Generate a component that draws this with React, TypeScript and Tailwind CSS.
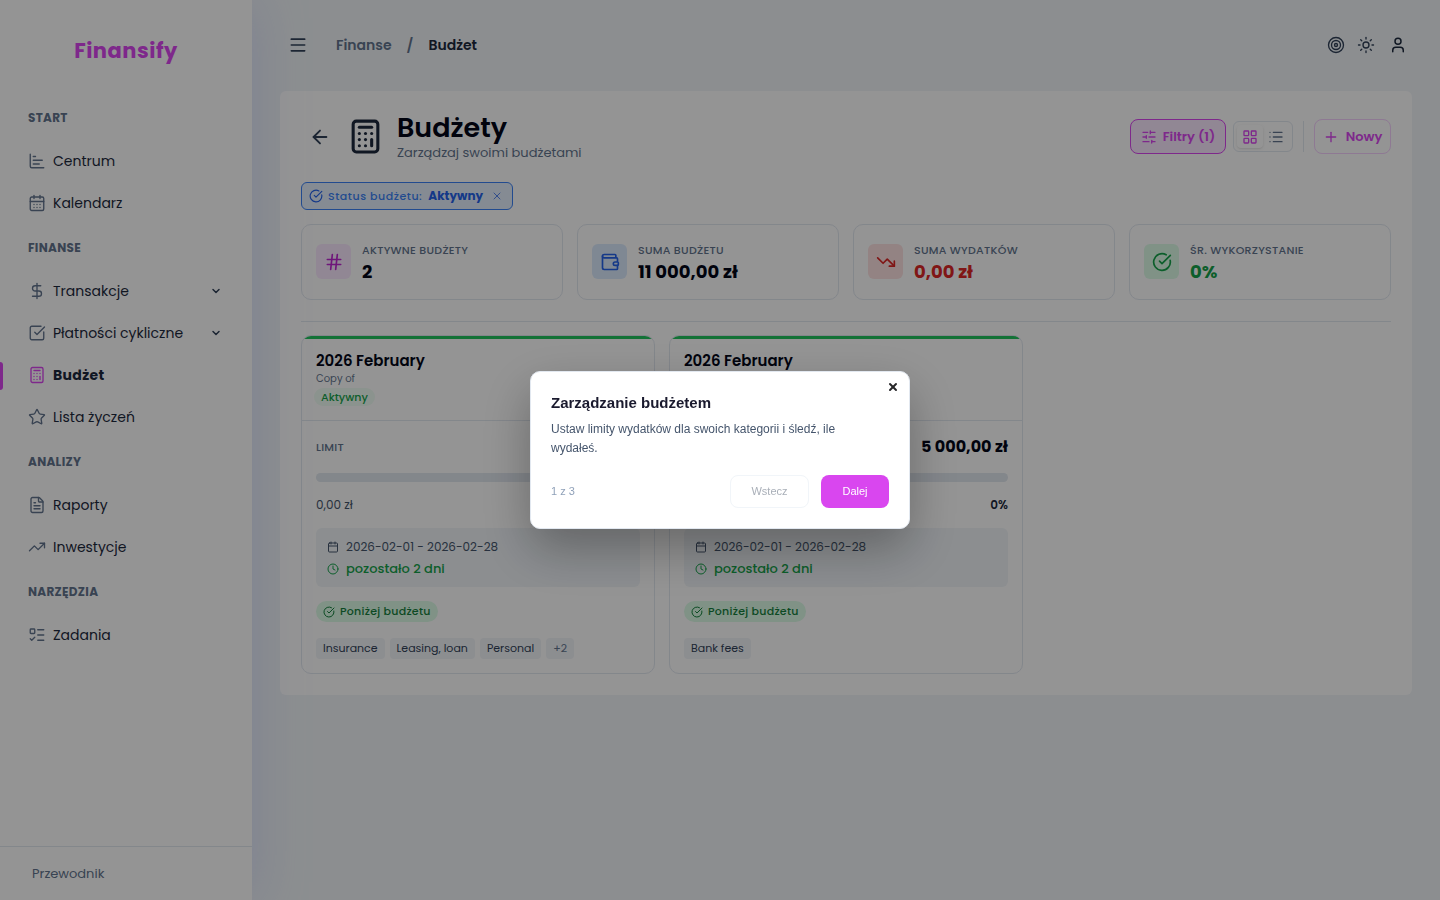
import React, { useState } from 'react';
import {
  ArrowLeft,
  Calculator,
  Calendar,
  CalendarDays,
  ChartBar,
  ChevronDown,
  CircleCheckBig,
  Clock,
  DollarSign,
  FileText,
  Hash,
  LayoutGrid,
  List,
  ListTodo,
  Menu,
  Plus,
  SlidersHorizontal,
  SquareCheckBig,
  Star,
  Sun,
  Target,
  TrendingDown,
  TrendingUp,
  User,
  Wallet,
  X,
  type LucideIcon,
} from 'lucide-react';
import clsx from 'clsx';

type NavItem = { label: string; icon: LucideIcon; expandable?: boolean; active?: boolean };

const sections: { title: string; items: NavItem[] }[] = [
  {
    title: 'START',
    items: [
      { label: 'Centrum', icon: ChartBar },
      { label: 'Kalendarz', icon: CalendarDays },
    ],
  },
  {
    title: 'FINANSE',
    items: [
      { label: 'Transakcje', icon: DollarSign, expandable: true },
      { label: 'Płatności cykliczne', icon: SquareCheckBig, expandable: true },
      { label: 'Budżet', icon: Calculator, active: true },
      { label: 'Lista życzeń', icon: Star },
    ],
  },
  {
    title: 'ANALIZY',
    items: [
      { label: 'Raporty', icon: FileText },
      { label: 'Inwestycje', icon: TrendingUp },
    ],
  },
  {
    title: 'NARZĘDZIA',
    items: [{ label: 'Zadania', icon: ListTodo }],
  },
];

const stats = [
  { label: 'AKTYWNE BUDŻETY', value: '2', icon: Hash, box: 'bg-[#fae8ff] text-[#c026d3]', text: 'text-slate-950' },
  { label: 'SUMA BUDŻETU', value: '11 000,00 zł', icon: Wallet, box: 'bg-[#dbeafe] text-[#2563eb]', text: 'text-slate-950' },
  { label: 'SUMA WYDATKÓW', value: '0,00 zł', icon: TrendingDown, box: 'bg-[#fee2e2] text-[#dc2626]', text: 'text-[#dc2626]' },
  { label: 'ŚR. WYKORZYSTANIE', value: '0%', icon: CircleCheckBig, box: 'bg-[#dcfce7] text-[#16a34a]', text: 'text-[#16a34a]' },
];

const budgets = [
  { id: 1, limit: '6 000,00 zł', tags: ['Insurance', 'Leasing, loan', 'Personal'], more: '+2' },
  { id: 2, limit: '5 000,00 zł', tags: ['Bank fees'], more: '' },
];

const Sidebar = () => (
  <aside className="sticky top-0 z-10 flex h-screen w-[252px] shrink-0 flex-col bg-white shadow-[0_0_50px_rgba(165,180,255,0.35)]">
    <div className="flex h-[94px] items-center justify-center pt-[7px]">
      <a href="#" className="text-[21px] leading-8 font-bold tracking-wide text-[#d946ef]">Finansify</a>
    </div>
    <nav className="flex-1">
      {sections.map((section) => (
        <div key={section.title}>
          <h2 className="flex h-[46px] items-center px-7 pt-[2px] text-xs font-bold tracking-wide text-slate-500">{section.title}</h2>
          {section.items.map(({ label, icon: Icon, expandable, active }) => (
            <a key={label} href="#" className="relative flex h-[42px] items-center gap-[7px] px-7 text-sm text-slate-800">
              {active && <span className="absolute top-2 left-0 h-7 w-[3px] rounded-r-sm bg-[#d946ef]" />}
              <Icon className={clsx('size-[18px]', active ? 'text-[#d946ef]' : 'text-slate-500')} strokeWidth={1.8} />
              <span className={clsx('flex-1', active && 'font-bold tracking-wide')}>{label}</span>
              {expandable && <ChevronDown className="mr-[2px] size-3 text-slate-700" strokeWidth={3} />}
            </a>
          ))}
        </div>
      ))}
    </nav>
    <div className="border-t border-slate-200 px-8 py-4">
      <a href="#" className="block text-[13px] leading-[21px] text-slate-500">Przewodnik</a>
    </div>
  </aside>
);

const Topbar = () => (
  <header className="flex h-[91px] items-center justify-between pb-[2px] text-slate-700">
    <div className="flex items-center gap-[21px]">
      <button aria-label="Menu" className="flex size-[35px] items-center justify-center text-slate-700">
        <Menu className="size-5" />
      </button>
      <nav className="flex gap-[15px] text-sm font-semibold text-slate-500">
        <a href="#">Finanse</a>
        <span>/</span>
        <span className="text-slate-800">Budżet</span>
      </nav>
    </div>
    <div className="flex items-center">
      <button aria-label="Cele" className="flex size-[30px] items-center justify-center">
        <Target className="size-[18px]" strokeWidth={1.8} />
      </button>
      <button aria-label="Motyw" className="flex size-[30px] items-center justify-center">
        <Sun className="size-[18px]" strokeWidth={1.8} />
      </button>
      <button aria-label="Profil" className="ml-[3px] flex size-7 items-center justify-center text-slate-800">
        <User className="size-[18px]" />
      </button>
    </div>
  </header>
);

const PageHeader = () => {
  const [view, setView] = useState('grid');

  return (
    <div className="flex items-center justify-between">
      <div className="flex items-center">
        <button aria-label="Wstecz" className="flex size-[37px] items-center justify-center text-slate-700">
          <ArrowLeft className="size-[22px]" />
        </button>
        <Calculator className="mr-[13px] ml-[9px] size-[37px] text-slate-800" />
        <div>
          <h1 className="text-[27px] leading-8 font-semibold text-slate-950">Budżety</h1>
          <p className="text-[13px] leading-[17px] text-slate-500">Zarządzaj swoimi budżetami</p>
        </div>
      </div>

      <div className="flex items-center text-[13px] font-semibold text-[#d946ef]">
        <button className="flex h-[35px] w-24 items-center justify-center gap-[6px] rounded-lg border border-[#d946ef] bg-[#fae8ff]">
          <SlidersHorizontal className="size-4" />
          Filtry (1)
        </button>
        <div className="ml-[7px] flex h-[31px] items-center rounded-md border border-slate-200 px-[3px]">
          <button
            aria-label="Siatka"
            onClick={() => setView('grid')}
            className={clsx('flex h-[23px] w-[26px] items-center justify-center rounded', view === 'grid' ? 'bg-white text-[#d946ef] shadow-sm' : 'text-slate-500')}
          >
            <LayoutGrid className="size-4" />
          </button>
          <button
            aria-label="Lista"
            onClick={() => setView('list')}
            className={clsx('flex h-[23px] w-[26px] items-center justify-center rounded', view === 'list' ? 'bg-white text-[#d946ef] shadow-sm' : 'text-slate-500')}
          >
            <List className="size-4" />
          </button>
        </div>
        <span className="mx-[10px] h-[31px] w-px bg-slate-200" />
        <button className="flex h-[35px] w-[77px] items-center justify-center gap-[7px] rounded-lg border border-[#f5d0fe]">
          <Plus className="size-4" />
          Nowy
        </button>
      </div>
    </div>
  );
};

const BudgetCard = ({ limit, tags, more }: { limit: string; tags: string[]; more: string }) => (
  <article className="overflow-hidden rounded-[10px] border border-slate-200">
    <div className="h-[3px] bg-[#22c55e]" />
    <div className="border-b border-slate-200 px-[14px] pt-[11px] pb-[14px]">
      <h3 className="text-[15px] leading-[21px] font-semibold text-slate-950">2026 February</h3>
      <p className="text-[10px] leading-4 text-slate-500">Copy of</p>
      <span className="mt-px -ml-[2px] flex h-[18px] w-fit items-center rounded-full bg-[#f0fdf4] px-[7px] text-[11px] font-medium text-[#16a34a]">
        Aktywny
      </span>
    </div>
    <div className="p-[14px]">
      <div className="flex h-6 items-center justify-between">
        <span className="text-[11px] font-medium tracking-wide text-slate-500">LIMIT</span>
        <span className="text-base font-bold text-slate-950">{limit}</span>
      </div>
      <div className="mt-[14px] h-[9px] rounded-full bg-slate-200" />
      <div className="mt-[14px] flex justify-between text-xs leading-[18px] text-slate-600">
        <span>0,00 zł</span>
        <span className="font-semibold text-slate-800">0%</span>
      </div>
      <div className="mt-[14px] flex flex-col gap-px rounded-md bg-slate-100 px-[11px] py-2 text-slate-600">
        <p className="flex items-center gap-[7px] text-xs leading-[21px]">
          <Calendar className="size-3" />
          2026-02-01 - 2026-02-28
        </p>
        <p className="flex items-center gap-[7px] text-[13px] leading-[21px] font-medium text-[#16a34a]">
          <Clock className="size-3" />
          pozostało 2 dni
        </p>
      </div>
      <span className="mt-[14px] flex h-[21px] w-fit items-center gap-[5px] rounded-full bg-[#dcfce7] px-[7px] text-[11px] font-medium tracking-wide text-[#15803d]">
        <CircleCheckBig className="size-3" />
        Poniżej budżetu
      </span>
      <div className="mt-4 flex gap-[5px] text-[11px] leading-[21px] text-slate-700">
        {tags.map((tag) => (
          <span key={tag} className="rounded bg-slate-100 px-[7px]">{tag}</span>
        ))}
        {more && <span className="rounded bg-slate-100 px-[7px] text-slate-500">{more}</span>}
      </div>
    </div>
  </article>
);

const TourDialog = ({ onClose }: { onClose: () => void }) => (
  <div className="fixed inset-0 z-50 flex items-center justify-center bg-black/42">
    <div
      role="dialog"
      aria-labelledby="tour-title"
      className="relative w-[380px] rounded-[10px] border border-slate-200 bg-white p-5 font-['Liberation_Sans',Arial,sans-serif] shadow-[0_20px_50px_rgba(0,0,0,0.3)]"
    >
      <button aria-label="Zamknij" onClick={onClose} className="absolute top-[9px] right-[10px] text-zinc-800">
        <X className="size-3" strokeWidth={4} />
      </button>
      <h2 id="tour-title" className="text-[15px] leading-[22px] font-bold text-[#1a1a2e]">Zarządzanie budżetem</h2>
      <p className="mt-[6px] pr-4 text-xs leading-[19px] text-slate-600">
        Ustaw limity wydatków dla swoich kategorii i śledź, ile wydałeś.
      </p>
      <div className="mt-[17px] flex items-center text-[11px]">
        <span className="flex-1 text-slate-400">1 z 3</span>
        <button disabled className="h-[33px] w-[79px] rounded-lg border border-slate-100 text-[#a9afb8]">Wstecz</button>
        <button className="ml-3 h-[33px] w-[68px] rounded-lg bg-[#d946ef] text-white">Dalej</button>
      </div>
    </div>
  </div>
);

const App = () => {
  const [tourOpen, setTourOpen] = useState(true);
  const [filterOn, setFilterOn] = useState(true);

  return (
    <div className="flex min-h-screen bg-slate-100 font-['Poppins','Inter',sans-serif]">
      <Sidebar />
      <main className="min-w-0 flex-1 px-7">
        <Topbar />
        <section className="rounded-md bg-white p-[21px]">
          <PageHeader />

          {/* Active filters */}
          {filterOn && (
            <div className="mt-[21px] flex h-7 w-fit items-center rounded-md border border-[#3b82f6] bg-[#dbeafe]/70 px-[7px] text-[11px] font-medium text-[#2563eb]">
              <CircleCheckBig className="mr-[5px] size-[14px]" />
              <span className="tracking-wider text-[#3b82f6]">Status budżetu:</span>
              <strong className="ml-[6px] text-xs font-bold">Aktywny</strong>
              <button aria-label="Usuń filtr" onClick={() => setFilterOn(false)} className="mr-[2px] ml-2">
                <X className="size-3" strokeWidth={1.5} />
              </button>
            </div>
          )}

          <div className="mt-[14px] grid grid-cols-4 gap-[14px]">
            {stats.map(({ label, value, icon: Icon, box, text }) => (
              <div key={label} className="flex h-[76px] items-center gap-[11px] rounded-[10px] border border-slate-200 px-[14px] pb-px">
                <span className={clsx('flex size-[35px] items-center justify-center rounded-md', box)}>
                  <Icon className="size-5" />
                </span>
                <div className="pt-[3px]">
                  <p className="text-[11px] leading-4 font-medium tracking-wide text-slate-500">{label}</p>
                  <p className={clsx('text-lg leading-[27px] font-bold', text)}>{value}</p>
                </div>
              </div>
            ))}
          </div>

          <hr className="mt-[21px] mb-[13px] border-slate-200" />

          <div className="grid grid-cols-3 gap-[14px]">
            {budgets.map((budget) => (
              <BudgetCard key={budget.id} limit={budget.limit} tags={budget.tags} more={budget.more} />
            ))}
          </div>
        </section>
      </main>
      {tourOpen && <TourDialog onClose={() => setTourOpen(false)} />}
    </div>
  );
};

export default App;
